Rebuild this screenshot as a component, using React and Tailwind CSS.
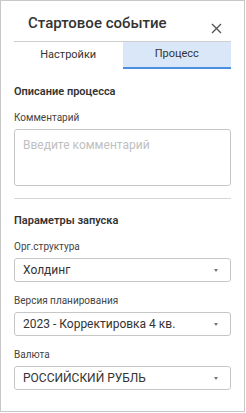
const Select = ({ value }) => (
  <div className="flex h-[24px] items-center justify-between rounded-[3px] border border-[#c6c6c6] pl-[8px] pr-[12px] text-[12px] text-[#333]">
    <span>{value}</span>
    <span className="h-0 w-0 border-x-[2.5px] border-t-[3px] border-x-transparent border-t-[#777]" />
  </div>
);

const Field = ({ label, children }) => (
  <div>
    <div className="mb-[5px] text-[10px] leading-[12px] text-[#444]">{label}</div>
    {children}
  </div>
);

export default function App() {
  return (
    <div className="h-[413px] w-[246px] bg-white font-['Roboto',sans-serif]">
      <div className="h-[412px] w-[245px] border border-[#c8c8c8] px-[13px]">
        {/* заголовок */}
        <div className="flex h-[40px] items-start justify-between">
          <div className="pl-[14px] pt-[12px] text-[15px] font-medium leading-[20px] text-[#333]">
            Стартовое событие
          </div>
          <button className="mr-[9px] mt-[22px] text-[#555]">
            <svg width="11" height="11" viewBox="0 0 11 11">
              <path d="M1 1L10 10M10 1L1 10" stroke="currentColor" strokeWidth="1.4" />
            </svg>
          </button>
        </div>

        {/* вкладки */}
        <div className="grid grid-cols-2 border-t border-[#cfcfcf] text-[11px] text-[#333]">
          <div className="flex h-[27px] items-center justify-center">Настройки</div>
          <div className="flex h-[27px] items-center justify-center border-b-2 border-[#4a8fe0] bg-[#dae7f8]">
            Процесс
          </div>
        </div>

        <div className="mt-[16px] text-[11px] font-semibold leading-[14px] text-[#333]">Описание процесса</div>
        <div className="mt-[13px]">
          <Field label="Комментарий">
            <div className="h-[57px] rounded-[3px] border border-[#c6c6c6] px-[8px] pt-[6px] text-[12px] text-[#c0c0c0]">
              Введите комментарий
            </div>
          </Field>
        </div>

        <div className="mt-[12px] border-t border-[#d6d6d6]" />

        <div className="mt-[15px] text-[11px] font-semibold leading-[14px] text-[#333]">Параметры запуска</div>
        <div className="mt-[13px] flex flex-col gap-[13px]">
          <Field label="Орг.структура">
            <Select value="Холдинг" />
          </Field>
          <Field label="Версия планирования">
            <Select value="2023 - Корректировка 4 кв." />
          </Field>
          <Field label="Валюта">
            <Select value="РОССИЙСКИЙ РУБЛЬ" />
          </Field>
        </div>
      </div>
    </div>
  );
}
